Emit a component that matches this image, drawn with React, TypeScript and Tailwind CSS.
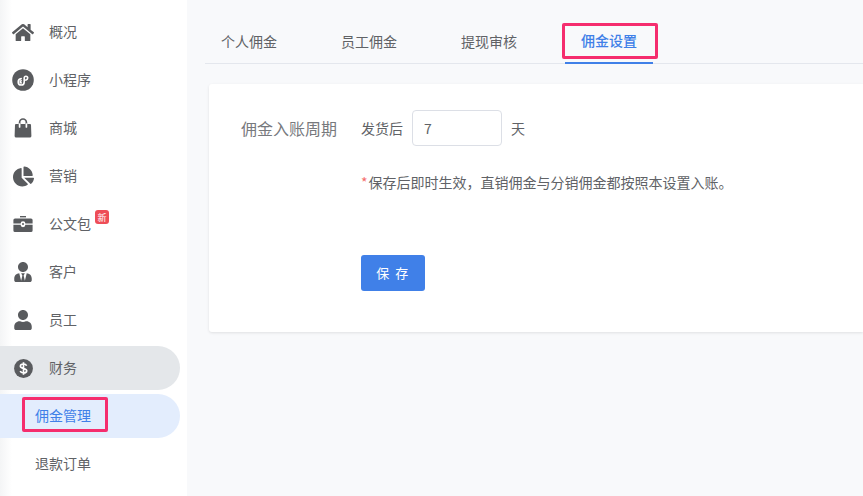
import { FaHome, FaChartPie, FaUserTie, FaUser } from "react-icons/fa";
import type { ReactNode } from "react";

const font = { fontFamily: '"Noto Sans CJK SC", "Liberation Sans", sans-serif' };

function MiniProgram() {
  return (
    <svg width="22" height="22" viewBox="0 0 22 22">
      <circle cx="11" cy="11" r="10.8" fill="#595b5e" />
      <path
        d="M9.2 9.6C7.6 9.8 6.2 11 6.2 12.9c0 1.8 1.4 3.1 3 3.1s3-1.3 3-3.1V9.1c0-1.1.8-1.9 1.7-1.9s1.8.8 1.8 1.9-.8 1.8-1.9 2M9.2 13.9c-.6 0-1-.5-1-1s.4-1 1-1.1"
        fill="none"
        stroke="#fff"
        strokeWidth="1.6"
        strokeLinecap="round"
      />
    </svg>
  );
}

function Bag() {
  return (
    <svg width="18" height="20" viewBox="0 0 18 20">
      <path d="M2 6h14a1 1 0 0 1 1 1l.4 11a1.6 1.6 0 0 1-1.6 1.6H2.2A1.6 1.6 0 0 1 .6 18L1 7a1 1 0 0 1 1-1z" fill="#595b5e" />
      <path d="M5.6 9V4.4a3.4 3.4 0 0 1 6.8 0V9" fill="none" stroke="#595b5e" strokeWidth="1.7" />
      <path d="M5.6 6v3M12.4 6v3" stroke="#fff" strokeWidth="1.7" strokeLinecap="round" />
    </svg>
  );
}

function Briefcase() {
  return (
    <svg width="20" height="18" viewBox="0 0 20 18">
      <path d="M7 1h6v1.4H7z" fill="#595b5e" />
      <path d="M2 3.4h16a1.6 1.6 0 0 1 1.6 1.6v3.6H12.4a2.4 2.4 0 0 0-4.8 0H.4V5A1.6 1.6 0 0 1 2 3.4z" fill="#595b5e" />
      <path d="M.4 9.8h7.2a2.4 2.4 0 0 0 4.8 0h7.2v5.6A1.6 1.6 0 0 1 18 17H2a1.6 1.6 0 0 1-1.6-1.6z" fill="#595b5e" />
      <circle cx="10" cy="9" r="1" fill="#595b5e" />
    </svg>
  );
}

function Dollar() {
  return (
    <svg width="19" height="19" viewBox="0 0 19 19">
      <circle cx="9.5" cy="9.5" r="9.4" fill="#595b5e" />
      <path
        d="M12.6 6.7c-.4-1-1.600-1.700-3.100-1.700-1.800 0-3.100.9-3.100 2.300 0 3 6.300 1.500 6.300 4.400 0 1.400-1.400 2.300-3.200 2.300-1.600 0-2.900-.7-3.300-1.900M9.500 3.200v12.600"
        fill="none"
        stroke="#fff"
        strokeWidth="1.700"
      />
    </svg>
  );
}

function NavItem({ icon, label, badge, active }: { icon: ReactNode; label: string; badge?: boolean; active?: boolean }) {
  return (
    <div className={`flex h-11 w-[180px] items-center rounded-r-full ${active ? "bg-[#e4e7ea]" : ""}`}>
      <span className="ml-[12px] flex w-[22px] justify-center text-[#595b5e]">{icon}</span>
      <span className="mb-[2px] ml-[15px] text-[14px] text-[#606266]">{label}</span>
      {badge && (
        <span className="mb-[14px] ml-[4px] flex h-[14px] w-[14px] items-center justify-center rounded-[3px] bg-[#ee4d57] text-[9px] leading-none text-white">
          新
        </span>
      )}
    </div>
  );
}

function Sidebar() {
  return (
    <aside className="flex h-[496px] w-[187px] shrink-0 flex-col gap-1 bg-white bg-gradient-to-r from-[#f4f5f6] to-white to-[12px] pt-[10px]">
      <NavItem icon={<FaHome size={23} />} label="概况" />
      <NavItem icon={<MiniProgram />} label="小程序" />
      <NavItem icon={<Bag />} label="商城" />
      <NavItem icon={<FaChartPie size={21} />} label="营销" />
      <NavItem icon={<Briefcase />} label="公文包" badge />
      <NavItem icon={<FaUserTie size={20} />} label="客户" />
      <NavItem icon={<FaUser size={20} />} label="员工" />
      <NavItem icon={<Dollar />} label="财务" active />
      <div className="relative flex h-11 w-[180px] items-center rounded-r-full bg-[#e3edfd] pb-[2px] pl-[35px] text-[14px] text-[#4080e8]">
        佣金管理
        <span className="absolute left-[22px] top-[3px] h-[35px] w-[86px] rounded-[2px] border-[3px] border-[#f52d6e]" />
      </div>
      <div className="flex h-11 w-[180px] items-center pb-[2px] pl-[35px] text-[14px] text-[#606266]">退款订单</div>
    </aside>
  );
}

function Tabs() {
  const tabs = ["个人佣金", "员工佣金", "提现审核"];
  return (
    <div className="ml-[18px] flex h-[64px] items-end border-b border-[#e4e7ed] pl-[16px]">
      {tabs.map((t) => (
        <div key={t} className="flex h-[44px] w-[120px] items-center text-[14px] text-[#606266]">
          {t}
        </div>
      ))}
      <div className="relative -mb-px -ml-[16px] flex h-[45px] w-[88px] items-center justify-center border-b-2 border-[#4080e8] pb-[1px] text-[14px] font-medium text-[#4080e8]">
        佣金设置
        <span className="absolute -left-[3px] top-[4px] h-[36px] w-[96px] rounded-[2px] border-[3px] border-[#f52d6e]" />
      </div>
    </div>
  );
}

function Settings() {
  return (
    <section className="ml-[22px] mt-5 h-[248px] rounded-l-[3px] bg-white pl-[32px] pt-[26px] shadow-[0_1px_3px_rgba(0,0,0,0.1)]">
      <div className="flex h-9 items-center">
        <span className="w-[120px] text-[16px] text-[#77797d]">佣金入账周期</span>
        <span className="text-[14px] text-[#606266]">发货后</span>
        <div className="ml-[9px] flex h-9 w-[90px] items-center rounded-[4px] border border-[#dcdfe6] pl-[11px] text-[14px] text-[#606266]">7</div>
        <span className="ml-[9px] text-[14px] text-[#606266]">天</span>
      </div>
      <p className="ml-[120px] mt-[26px] flex h-[20px] items-center text-[14px] text-[#606266]">
        <span className="mr-[1px] text-[#f56c6c]">*</span>保存后即时生效，直销佣金与分销佣金都按照本设置入账。
      </p>
      <button className="ml-[120px] mt-[63px] block h-9 w-16 rounded-[3px] bg-[#4080e8] text-[13px] tracking-[1.5px] text-white">
        保 存
      </button>
    </section>
  );
}

export default function App() {
  return (
    <div className="flex h-[496px] w-[863px] overflow-hidden bg-[#f8f9fb]" style={font}>
      <Sidebar />
      <main className="min-w-0 flex-1">
        <Tabs />
        <Settings />
      </main>
    </div>
  );
}
